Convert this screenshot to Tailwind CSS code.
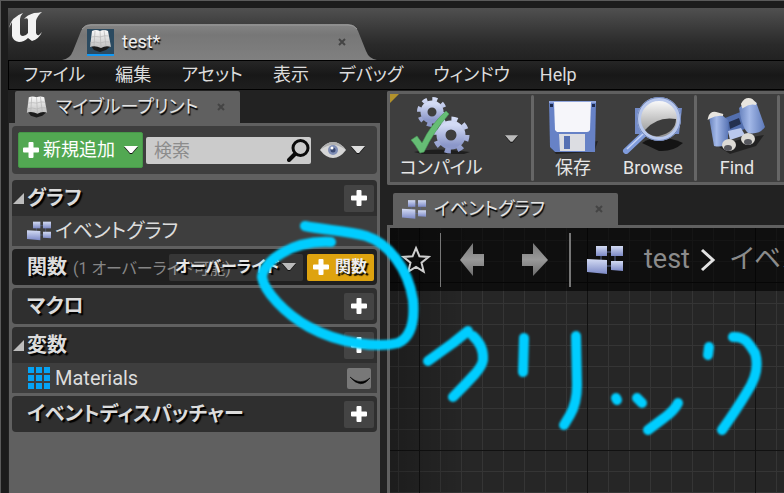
<!DOCTYPE html>
<html lang="ja">
<head>
<meta charset="utf-8">
<meta name="viewport" content="width=device-width, initial-scale=1">
<title>test*</title>
<script src="https://cdn.jsdelivr.net/npm/@tailwindcss/browser@4"></script>
</head>
<body class="relative flex h-screen flex-col overflow-hidden border-t border-l border-[#5a5a5a] bg-[#1c1c1c] pt-[7px] pl-[7px] font-[Roboto,'Noto_Sans_CJK_JP',sans-serif] text-[17px] leading-none text-[#dcdcdc] [font-feature-settings:'palt']">

<!-- Shared symbols -->
<svg class="absolute size-0" aria-hidden="true">
  <defs>
    <linearGradient id="node" x1="0" y1="0" x2="0" y2="1"><stop offset="0" stop-color="#d3dbf3"/><stop offset="1" stop-color="#7c89c6"/></linearGradient>
    <linearGradient id="page" x1="0" y1="0" x2="0" y2="1"><stop offset="0" stop-color="#fafafa"/><stop offset="1" stop-color="#bdbdbd"/></linearGradient>
    <linearGradient id="gear" x1="0" y1="0" x2="0" y2="1"><stop offset="0" stop-color="#d3dbf5"/><stop offset="1" stop-color="#8b97c9"/></linearGradient>
    <linearGradient id="lens" x1="0" y1="0" x2="0" y2="1"><stop offset="0" stop-color="#fff"/><stop offset="1" stop-color="#8a8a8a"/></linearGradient>
    <linearGradient id="tube" x1="0" y1="0" x2="1" y2="0"><stop offset="0" stop-color="#6681bd"/><stop offset=".4" stop-color="#a4b9e8"/><stop offset="1" stop-color="#5c78b8"/></linearGradient>
    <linearGradient id="arrow" x1="0" y1="0" x2="0" y2="1"><stop offset="0" stop-color="#777"/><stop offset=".5" stop-color="#999"/><stop offset="1" stop-color="#6c6c6c"/></linearGradient>
    <symbol id="i-book" viewBox="0 0 27 24">
      <path d="M4 17l3 4 6 2 6-2 5-4z" fill="#1b1b1b"/>
      <path d="M5 2q4-2 8 0 4-2 8 0l3 16q-5-2-10 1-6-3-11-1z" fill="url(#page)"/>
      <path d="M13 2l1 16M8 2l-1 15M17 1l2 16M4 8q5-1 9 0 5-2 9-1M3 14q6-2 10 0 5-2 10-1" fill="none" stroke="#b4b4b4" stroke-width=".7"/>
    </symbol>
    <symbol id="i-nodes" viewBox="0 0 36 30">
      <path d="M14 7h14v14M14 7v14h14" fill="none" stroke="#59658f"/>
      <path d="M9 1h11v10H9z" fill="url(#node)"/><path d="M24 1h12v10H24z" fill="url(#node)"/><path d="M0 14l20 1v14L0 27z" fill="url(#node)"/><path d="M24 16h12v10l-12-1z" fill="url(#node)"/>
    </symbol>
    <symbol id="i-plus" viewBox="0 0 16 16"><path d="M5.500 1q0-1 1-1h3q1 0 1 1v4.500H15q1 0 1 1v3q0 1-1 1h-4.500V15q0 1-1 1h-3q-1 0-1-1v-4.500H1q-1 0-1-1v-3q0-1 1-1h4.500z" fill="#fff"/></symbol>
    <symbol id="i-down" viewBox="0 0 14 9"><path d="M0 1h14L8 8H6z" fill="#111"/><path d="M0 0h14L8 7H6z" fill="currentColor"/></symbol>
    <symbol id="i-x" viewBox="0 0 10 10"><path d="M2 2l6 6M8 2L2 8" stroke="#444" stroke-width="2"/></symbol>
    <symbol id="i-open" viewBox="0 0 11 11"><path d="M11 0v11H0z" fill="#bdbdbd"/></symbol>
  </defs>
</svg>

<!-- Title bar -->
<header class="flex h-[52px] shrink-0 items-end bg-linear-to-b from-[#505050] via-[#2a2a2a] via-70% to-[#222]">
  <svg class="mb-[18px] ml-px h-[31px] w-[34px] shrink-0" viewBox="0 0 34 31" role="img" aria-label="Unreal">
    <path d="M0 17Q2 6 14 2q-3 3-3 6v14q0 3 3 3 3 0 5-3V9q0-3-4-1 3-4 10-6 4 0 8-1-5 4-6 9v12q1 3 3 2l3-3q-3 7-10 9l-4-3q-4 4-9 4-6-1-7-6V11q-1 2-3 6z" fill="#f3f3f3"/>
  </svg>
  <div class="relative ml-[19px] flex h-9 w-[315px] shrink-0 items-center pr-[30px] pl-[25px]">
    <svg class="absolute inset-0 size-full" viewBox="0 0 315 36" preserveAspectRatio="none">
      <defs><linearGradient id="tab" x1="0" y1="0" x2="0" y2="1"><stop offset="0" stop-color="#858585"/><stop offset=".3" stop-color="#777"/><stop offset="1" stop-color="#808080"/></linearGradient></defs>
      <path d="M0 36q8-1 11-9l8-20Q22 0 29 0h257q7 0 10 7l8 20q3 8 11 9z" fill="url(#tab)"/>
      <path d="M20 5q3-4 9-4h257q6 0 9 4" fill="none" stroke="#999"/>
    </svg>
    <span class="relative flex h-[27px] w-[27px] items-start border-b-2 border-[#1199f5] bg-[#2b4a60]"><svg class="h-6 w-[27px]"><use href="#i-book"/></svg></span>
    <span class="relative ml-2 flex-1 text-[18px] text-[#eee] [text-shadow:1px_2px_1px_#000]">test*</span>
    <button class="relative size-[10px]" aria-label="閉じる"><svg class="size-[10px]"><use href="#i-x"/></svg></button>
  </div>
</header>

<!-- Menu bar -->
<nav class="flex h-[30px] shrink-0 items-center gap-[30px] border border-r-0 border-black bg-linear-to-b from-[#262626] via-[#181818] to-[#1e1e1e] pb-px pl-[14px] text-[18px] whitespace-nowrap">
  <a href="#">ファイル</a><a href="#">編集</a><a href="#">アセット</a><a href="#">表示</a><a href="#">デバッグ</a><a href="#">ウィンドウ</a><a href="#">Help</a>
</nav>

<div class="flex min-h-0 flex-1 gap-[7px] bg-[#222] pt-px">

  <!-- My Blueprint -->
  <aside class="flex w-[372px] shrink-0 flex-col">
    <div class="ml-[7px] flex h-8 w-[225px] items-center rounded-t-xs bg-[#606060] pr-[14px] pl-[9px]">
      <svg class="h-6 w-[26px]"><use href="#i-book"/></svg>
      <h2 class="ml-[6px] flex-1 text-[18px] whitespace-nowrap text-[#e4e4e4] [text-shadow:1px_2px_1px_#000]">マイブループリント</h2>
      <button aria-label="閉じる"><svg class="size-[10px]"><use href="#i-x"/></svg></button>
    </div>
    <div class="ml-px flex flex-1 flex-col gap-[3px] bg-[#606060] p-[3px]">
      <div class="mb-[3px] flex h-12 shrink-0 items-center rounded bg-[#3e3e3e] px-[6px]">
        <button class="flex h-9 w-[125px] items-center gap-1 rounded-xs border border-[#469748] bg-[#52a852] px-1 text-[18px] text-white">
          <svg class="size-4"><use href="#i-plus"/></svg><span class="flex-1 text-left whitespace-nowrap">新規追加</span><svg class="h-[9px] w-[14px]"><use href="#i-down"/></svg>
        </button>
        <label class="ml-[3px] flex h-[27px] w-[165px] items-center rounded-xs bg-[#cbcbcb] pr-px pl-2">
          <input type="search" aria-label="検索" placeholder="検索" class="w-0 flex-1 bg-transparent text-[18px] text-[#333] outline-none placeholder:text-[#8c8c8c]">
          <svg class="size-[23px]" viewBox="0 0 23 23"><circle cx="13.500" cy="9" r="7.500" fill="none" stroke="#0b0b0b" stroke-width="3"/><path d="M8 15l-6 6" stroke="#0b0b0b" stroke-width="4" stroke-linecap="round"/></svg>
        </label>
        <button class="ml-[9px] flex items-center gap-[5px] text-[#ddd]" aria-label="表示オプション">
          <svg class="h-4 w-[26px]" viewBox="0 0 26 16"><path d="M0 8Q6 0 13 0t13 8q-6 8-13 8T0 8z" fill="#d6d6d6"/><path d="M0 8Q6 0 13 0t13 8Q19 3 13 3T0 8z" fill="#b0b0b0"/><circle cx="13" cy="8" r="5" fill="#7f8eb6"/><circle cx="13" cy="8" r="2.500" fill="#3c4b74"/><circle cx="12" cy="6" r="1.500" fill="#fff"/></svg>
          <svg class="h-[9px] w-[14px]"><use href="#i-down"/></svg>
        </button>
      </div>

      <section>
        <div class="flex h-9 items-center rounded-t bg-[#2f2f2f] pr-[3px] pl-px">
          <svg class="size-[11px]"><use href="#i-open"/></svg>
          <h3 class="ml-[3px] flex-1 text-[20px] font-bold [text-shadow:2px_2px_1px_#000]">グラフ</h3>
          <button class="grid h-[27px] w-[30px] place-items-center rounded-xs bg-[#444]" aria-label="グラフを追加"><svg class="size-4"><use href="#i-plus"/></svg></button>
        </div>
        <div class="flex h-[30px] items-center bg-[#3e3e3e] pl-[15px] text-[20px]">
          <svg class="h-[20px] w-[24px]"><use href="#i-nodes"/></svg><span class="ml-1">イベントグラフ</span>
        </div>
      </section>

      <section class="flex h-9 items-center rounded bg-[#202020] pr-[3px] pl-[15px]">
        <h3 class="text-[20px] font-bold [text-shadow:2px_2px_1px_#000]">関数</h3>
        <span class="ml-[6px] w-0 flex-1 overflow-visible pt-[3px] text-[16px] whitespace-nowrap text-[#868686]">(1 オーバーライド可能)</span>
        <button class="relative flex h-[27px] w-[134px] items-center rounded-xs bg-white/10 pr-[7px] pl-[6px] text-[16px] font-bold text-[#bbb]">
          <span class="flex-1 text-left whitespace-nowrap text-[#e6e6e6] [text-shadow:2px_2px_1px_#000]">オーバーライド</span><svg class="h-[9px] w-[14px]"><use href="#i-down"/></svg>
        </button>
        <button class="ml-1 flex h-[27px] w-[67px] items-center gap-[6px] rounded-xs bg-[#dea30f] pl-[6px] text-[16px] font-bold whitespace-nowrap text-[#eee]">
          <svg class="size-4"><use href="#i-plus"/></svg><span class="[text-shadow:2px_2px_1px_#000]">関数</span>
        </button>
      </section>

      <section class="flex h-9 items-center rounded bg-[#2f2f2f] pr-[3px] pl-[15px]">
        <h3 class="flex-1 text-[20px] font-bold [text-shadow:2px_2px_1px_#000]">マクロ</h3>
        <button class="grid h-[27px] w-[30px] place-items-center rounded-xs bg-[#444]" aria-label="マクロを追加"><svg class="size-4"><use href="#i-plus"/></svg></button>
      </section>

      <section>
        <div class="flex h-9 items-center rounded-t bg-[#2f2f2f] pr-[3px] pl-px">
          <svg class="size-[11px]"><use href="#i-open"/></svg>
          <h3 class="ml-[3px] flex-1 text-[20px] font-bold [text-shadow:2px_2px_1px_#000]">変数</h3>
          <button class="grid h-[27px] w-[30px] place-items-center rounded-xs bg-[#444]" aria-label="変数を追加"><svg class="size-4"><use href="#i-plus"/></svg></button>
        </div>
        <div class="flex h-[30px] items-center bg-[#3e3e3e] pr-[6px] pl-4 text-[20px]">
          <svg class="size-[22px]" viewBox="0 0 22 22"><path d="M0 0h6v6H0zM8 0h6v6H8zM16 0h6v6h-6zM0 8h6v6H0zM8 8h6v6H8zM16 8h6v6h-6zM0 16h6v6H0zM8 16h6v6H8zM16 16h6v6h-6z" fill="#05a3f5"/></svg>
          <span class="ml-[5px] flex-1">Materials</span>
          <button class="grid h-[21px] w-6 place-items-center rounded-xs bg-[#787878]" aria-label="非公開"><svg class="h-[21px] w-6" viewBox="0 0 24 21"><path d="M3 9q10 9 20 1-9 12-20-1z" fill="#000" stroke="#000" stroke-width=".5"/></svg></button>
        </div>
      </section>

      <section class="flex h-9 items-center rounded bg-[#2f2f2f] pr-[3px] pl-[15px]">
        <h3 class="flex-1 text-[20px] font-bold [text-shadow:2px_2px_1px_#000]">イベントディスパッチャー</h3>
        <button class="grid h-[27px] w-[30px] place-items-center rounded-xs bg-[#444]" aria-label="イベントディスパッチャーを追加"><svg class="size-4"><use href="#i-plus"/></svg></button>
      </section>
    </div>
  </aside>

  <main class="flex min-w-0 flex-1 flex-col">
    <!-- Toolbar -->
    <div class="relative flex h-[94px] shrink-0 overflow-hidden rounded-l-xs border-[3px] border-r-0 border-[#606060] bg-[#3e3e3e] text-[18px] whitespace-nowrap text-[#e6e6e6] [text-shadow:1px_2px_1px_#000]">
      <svg class="absolute -top-[3px] -left-[3px] size-[15px]" viewBox="0 0 15 15"><path d="M0 0h15L0 15z" fill="#b2922c"/></svg>
      <button class="flex w-[102px] shrink-0 flex-col items-center gap-[5px] pt-[3px]">
        <svg class="h-[57px] w-[62px]" viewBox="0 0 62 57">
          <path d="M4 55q20-5 56 0l-6 2H12z" fill="#111" opacity=".7"/>
          <g fill="none" stroke="url(#gear)">
            <circle cx="22" cy="15" r="8" stroke-width="7"/><circle cx="22" cy="15" r="13" stroke-width="4" stroke-dasharray="5 5.200"/>
            <circle cx="41" cy="38" r="10" stroke-width="9"/><circle cx="41" cy="38" r="16" stroke-width="5" stroke-dasharray="6 6.560"/>
          </g>
          <path d="M1 43l6-4 5 7Q21 27 36 14l3 3Q24 34 14 55l-4 1Q5 47 1 43z" fill="#66bd75" stroke="#489a58" stroke-width=".6"/>
        </svg>
        <span>コンパイル</span>
      </button>
      <button class="flex w-[39px] shrink-0 justify-center pt-[41px] text-[#bbb]" aria-label="コンパイルオプション"><svg class="h-[9px] w-[13px]"><use href="#i-down"/></svg></button>
      <span class="my-px w-[3px] shrink-0 rounded bg-[#666]"></span>
      <button class="flex w-[78px] shrink-0 flex-col items-center gap-[5px] pt-[3px]">
        <svg class="h-[57px] w-[54px]" viewBox="0 0 54 57">
          <path d="M6 52l46-8-4 11-38 2z" fill="#111" opacity=".6"/>
          <path d="M3 4h47l-1 51H9l-5-5z" fill="#6782c6"/><path d="M3 4h47v2H3z" fill="#90a6dd"/>
          <path d="M8 5h37l-1 28q-1 2-3 2H11l-2-2z" fill="#f6f6fa"/><path d="M13 37h26v17H14z" fill="#dcdde2"/><path d="M18 39h6v13h-6z" fill="#5670b3"/>
          <path d="M4 7h3v3H4zM46 7h3v3h-3z" fill="#1c2a4e"/>
        </svg>
        <span>保存</span>
      </button>
      <button class="flex w-[82px] shrink-0 flex-col items-center gap-[5px] pt-[3px]">
        <svg class="h-[57px] w-[62px]" viewBox="0 0 62 57">
          <path d="M20 46q16-11 41 0-10 9-24 8z" fill="#0d0d0d" opacity=".85"/>
          <path d="M13 11h47l-3 26H13z" fill="#738bc7"/>
          <path d="M22 37L4 54" stroke="#7f9bdb" stroke-width="6" stroke-linecap="round"/><path d="M21 37L5 52" stroke="#c4d3f5" stroke-width="1.500"/>
          <circle cx="37" cy="22" r="20" fill="url(#lens)" stroke="#b9c8ec" stroke-width="4"/>
          <path d="M23 33Q35 19 54 22q0 13-17 17-9 1-14-6z" fill="#3c3c3c"/><circle cx="37" cy="22" r="21.500" fill="none" stroke="#7187bb"/>
        </svg>
        <span>Browse</span>
      </button>
      <span class="my-px w-[3px] shrink-0 rounded bg-[#666]"></span>
      <button class="flex w-[80px] shrink-0 flex-col items-center gap-[5px] pt-[3px]">
        <svg class="h-[57px] w-[60px]" viewBox="0 0 60 57">
          <path d="M12 50q20-9 45-12l-8 11-26 8z" fill="#111" opacity=".6"/>
          <path d="M18 21l18-7 2 18-16 6z" fill="#536fae"/><path d="M22 25l10-4 2 6-11 5z" fill="#23304f"/>
          <path d="M2 20q7-5 14-1l5 4v22q-4 6-14 4z" fill="url(#tube)"/><path d="M32 11q8-8 17-6l9 25q-6 8-17 6-6-5-9-25z" fill="url(#tube)"/>
          <path d="M2 21q1-6 7-5l7 2q-7-1-14 3zM35 7q4-7 10-4l4 4q-6-2-13 3z" fill="#e8e5df" stroke="#e8e5df" stroke-width="2"/>
          <path d="M21 34l13-3 4 7-15 5z" fill="#b9c8ed"/>
          <ellipse cx="22" cy="48" rx="7" ry="6" fill="#dcdad5"/><ellipse cx="21" cy="51" rx="4" ry="3" fill="#55565c"/>
          <ellipse cx="41" cy="42" rx="7" ry="6" fill="#dcdad5"/><ellipse cx="41" cy="45" rx="4" ry="3" fill="#55565c"/>
        </svg>
        <span>Find</span>
      </button>
      <span class="my-px w-[3px] shrink-0 rounded bg-[#666]"></span>
    </div>

    <!-- Graph tab -->
    <div class="mt-2 ml-[6px] flex h-8 w-[225px] shrink-0 items-center rounded-t-xs bg-[#606060] pr-[14px] pl-[9px]">
      <svg class="h-[21px] w-6"><use href="#i-nodes"/></svg>
      <h2 class="ml-2 flex-1 text-[18px] whitespace-nowrap text-[#e4e4e4] [text-shadow:1px_2px_1px_#000]">イベントグラフ</h2>
      <button aria-label="閉じる"><svg class="size-[10px]"><use href="#i-x"/></svg></button>
    </div>

    <!-- Graph canvas -->
    <div class="relative flex-1 overflow-hidden border-t-[3px] border-l-[3px] border-[#606060] bg-[#262626]">
      <svg class="absolute inset-0 size-full">
        <defs>
          <pattern id="grid" x="29" y="54" width="168" height="168" patternUnits="userSpaceOnUse">
            <path d="M21.500 0v168M42.500 0v168M63.500 0v168M84.500 0v168M105.500 0v168M126.500 0v168M147.500 0v168M0 21.500h168M0 42.500h168M0 63.500h168M0 84.500h168M0 105.500h168M0 126.500h168M0 147.500h168" stroke="#353535"/>
            <path d="M.5 0v168M0 .5h168" stroke="#111"/>
          </pattern>
          <linearGradient id="shade"><stop offset="0" stop-color="#000" stop-opacity=".25"/><stop offset=".2" stop-color="#000" stop-opacity="0"/></linearGradient>
        </defs>
        <rect width="100%" height="100%" fill="url(#grid)"/><rect width="100%" height="100%" fill="url(#shade)"/>
      </svg>
      <div class="relative flex h-[63px] items-center bg-black/60 pl-[11px] text-[27px] whitespace-nowrap text-[#8b8b8b] *:shrink-0">
        <button aria-label="お気に入り"><svg class="h-[29px] w-[30px]" viewBox="0 0 30 29"><path d="M15 3l3.400 8.200 9.100.7-7 5.800 2.200 8.800L15 21.800l-7.700 4.700 2.200-8.800-7-5.800 9.100-.7z" fill="none" stroke="#cfcfcf" stroke-width="2"/></svg></button>
        <span class="ml-[9px] h-[54px] w-px bg-[#777]"></span>
        <button class="ml-[18px]" aria-label="戻る"><svg class="h-9 w-[26px]" viewBox="0 0 26 36"><path d="M1 18L14 1v11h11v12H14v10z" fill="url(#arrow)"/></svg></button>
        <button class="ml-[36px]" aria-label="進む"><svg class="h-9 w-[28px]" viewBox="0 0 28 36"><path d="M27 18L12 1v11H1v12h11v10z" fill="url(#arrow)"/></svg></button>
        <span class="ml-[20px] h-[54px] w-[2px] bg-[#777]"></span>
        <svg class="ml-4 h-[30px] w-9"><use href="#i-nodes"/></svg>
        <a href="#" class="ml-[21px]">test</a>
        <svg class="ml-[10px] h-6 w-4" viewBox="0 0 16 24"><path d="M2 2l11 10L2 22" fill="none" stroke="#e2e2e2" stroke-width="3"/></svg>
        <a href="#" class="ml-[14px]">イベントグラフ</a>
      </div>
    </div>
  </main>
</div>

<!-- Marker annotation: circle around the add-function button and the handwritten word -->
<svg class="pointer-events-none absolute -top-px -left-px h-[493px] w-[784px]" viewBox="0 0 784 493" role="img" aria-label="クリック">
  <defs><filter id="soft" x="-5%" y="-5%" width="110%" height="110%"><feGaussianBlur stdDeviation="1"/></filter></defs>
  <g fill="none" stroke="#00cdff" stroke-width="10" stroke-linecap="round" stroke-linejoin="round" filter="url(#soft)">
    <path d="M305 226C325 230 347 231 366 236C388 243 408 268 413 300C415 322 411 337 398 343C378 348 340 344 309 327C285 314 264 291 262 277C263 262 291 240 331 242"/>
    <path d="M428 361L453 343L468 331M473 336Q484 346 483 360Q482 366 475 374Q464 386 453 397"/>
    <path d="M524 338L523 372M576 336L577 385Q577 403 570 415L564 425"/>
    <path d="M616 398L617 400M637 398L642 403M678 403Q674 411 664 418L648 430"/>
    <path d="M709 347L708 355M733 337C745 336 749 344 755 353C759 366 755 380 747 392Q737 409 722 430"/>
  </g>
</svg>
</body>
</html>
